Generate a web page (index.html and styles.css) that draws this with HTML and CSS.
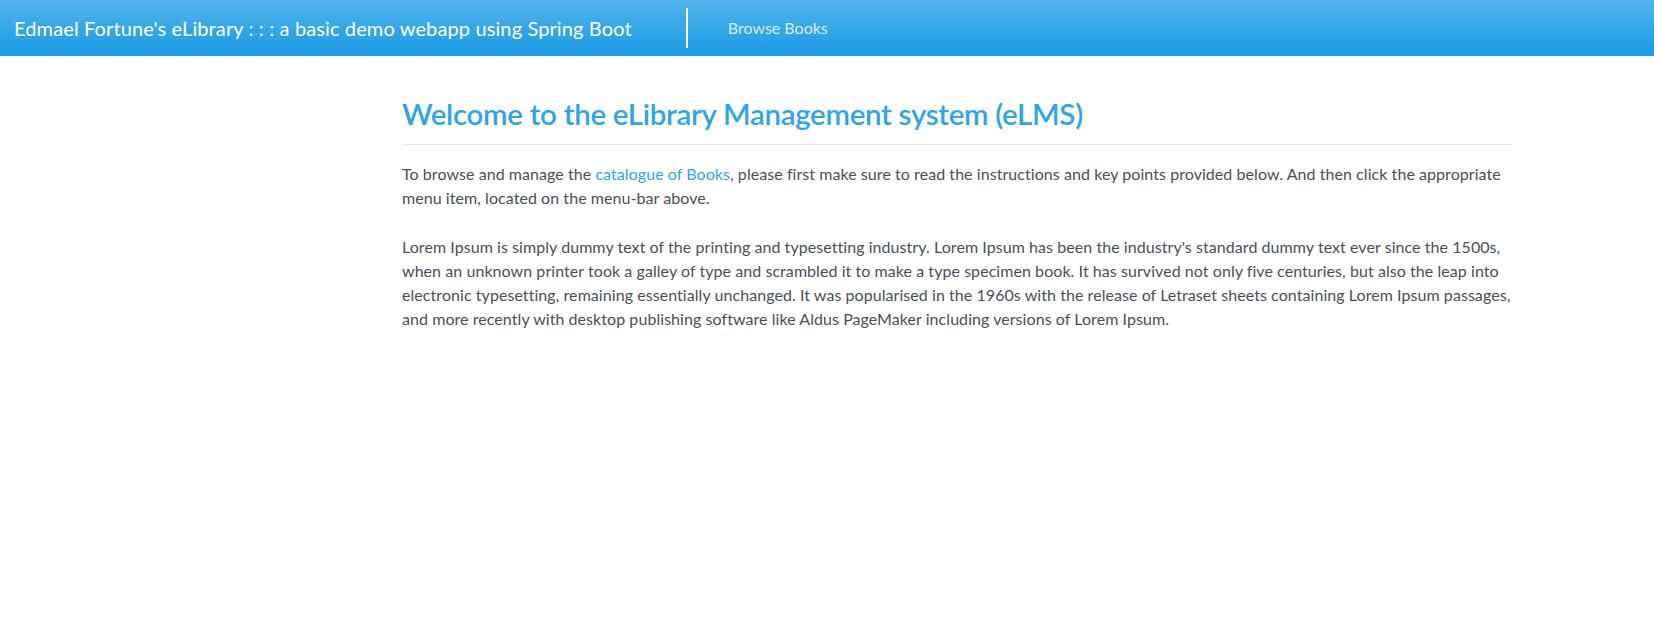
FILE: index.html
```html
<!DOCTYPE html>
<html lang="en">
<head>
<meta charset="utf-8">
<title>eLibrary Management System</title>
<link rel="stylesheet" href="styles.css">
</head>
<body>
<nav class="navbar">
  <a class="brand" href="#">Edmael Fortune's eLibrary : : : a basic demo webapp using Spring Boot</a>
  <div class="divider"></div>
  <a class="nav-link" href="#">Browse Books</a>
</nav>
<main class="content">
  <h2 class="title">Welcome to the eLibrary Management system (eLMS)</h2>
  <hr class="rule">
  <p class="lead-text">To browse and manage the <a class="link" href="#">catalogue of Books</a>, please first make sure to read the instructions and key points provided below. And then click the appropriate menu item, located on the menu-bar above.</p>
  <p class="body-text">Lorem Ipsum is simply dummy text of the printing and typesetting industry. Lorem Ipsum has been the industry's standard dummy text ever since the 1500s, when an unknown printer took a galley of type and scrambled it to make a type specimen book. It has survived not only five centuries, but also the leap into electronic typesetting, remaining essentially unchanged. It was popularised in the 1960s with the release of Letraset sheets containing Lorem Ipsum passages, and more recently with desktop publishing software like Aldus PageMaker including versions of Lorem Ipsum.</p>
</main>
</body>
</html>
```

FILE: styles.css
```css
* { box-sizing: border-box; }
html, body { margin: 0; padding: 0; }
body {
  font-family: Lato, "Liberation Sans", sans-serif;
  font-size: 16px;
  line-height: 24px;
  letter-spacing: 0.06px;
  color: #495057;
  background: #fff;
}
.navbar {
  height: 56px;
  display: flex;
  align-items: center;
  padding: 0 0 0 14px;
  background-image: linear-gradient(#54b4eb, #2fa4e7 60%, #1d9ce5);
}
.brand {
  color: #fff;
  text-decoration: none;
  font-size: 20px;
  line-height: 30px;
  letter-spacing: 0.12px;
  white-space: nowrap;
}
.divider {
  width: 2px;
  height: 40px;
  background: #fff;
  margin-left: 54px;
  margin-right: 40px;
}
.nav-link {
  color: rgba(255,255,255,0.82);
  text-decoration: none;
  font-size: 16px;
  letter-spacing: 0;
}
.content {
  width: 1110px;
  margin-left: 402px;
  padding-top: 39px;
}
.title {
  margin: 0 0 11px;
  font-size: 29.5px;
  line-height: 38px;
  letter-spacing: -0.3px;
  font-weight: 600;
  color: #2fa4e7;
}
.rule {
  margin: 0 0 17px;
  border: 0;
  border-top: 1px solid #e3e5e8;
}
.lead-text { margin: 0 0 25px; }
.body-text { margin: 0; }
.link { color: #2fa4e7; text-decoration: none; }
```
